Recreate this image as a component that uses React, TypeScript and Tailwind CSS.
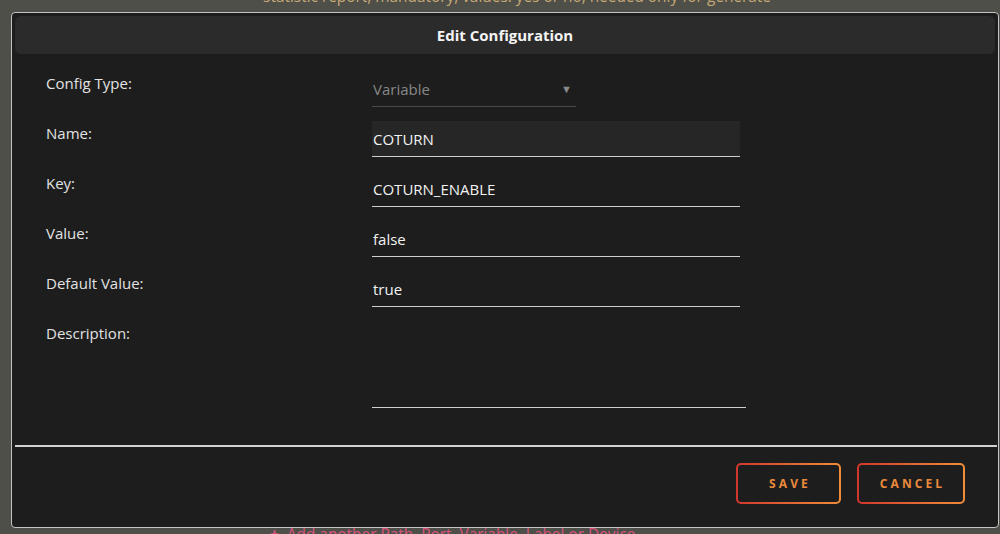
import React from "react";

const font = { fontFamily: '"Open Sans", "Noto Sans", sans-serif' };

function Label({ children }: { children: React.ReactNode }) {
  return <div className="w-[326px] shrink-0 pt-[2px] text-[15px] leading-[20px] text-[#e2e2e2]">{children}</div>;
}

function TextField({ value, filled }: { value: string; filled?: boolean }) {
  return (
    <div
      className={`w-[368px] h-[36px] flex items-center pt-[1px] pl-[1px] border-b border-[#cfcfcf] text-[15px] text-[#f2f2f2] ${
        filled ? "bg-[#262626]" : ""
      }`}
    >
      {value}
    </div>
  );
}

export default function App() {
  return (
    <div className="w-[1000px] h-[534px] overflow-hidden bg-[#4e4f48] flex flex-col" style={font}>
      <div className="h-[12px] overflow-hidden flex justify-center pl-[34px]">
        <div className="mt-[-11px] text-[15.4px] leading-[16px] text-[#c7a877] whitespace-nowrap">
          statistic report, mandatory, values: yes or no, needed only for generate
        </div>
      </div>
      <div className="ml-[11px] w-[988px] h-[516px] shrink-0 border border-[#c4c4c4] rounded-[4px] bg-[#1d1d1d] p-[3px] flex flex-col">
        <div className="h-[38px] shrink-0 rounded-[6px] bg-[#2b2b2b] flex items-center justify-center text-[15px] font-bold text-[#f4f4f4]">
          Edit Configuration
        </div>
        <div className="pl-[31px] pt-[17px] flex flex-col gap-[14px]">
          <div className="flex">
            <Label>Config Type:</Label>
            <div className="w-[204px] h-[36px] flex items-center justify-between pt-[1px] pl-[1px] pr-[4px] border-b border-[#4a4a4a] text-[15px] text-[#878787]">
              <span>Variable</span>
              <span className="text-[11px] text-[#8a8a8a]">▼</span>
            </div>
          </div>
          <div className="flex">
            <Label>Name:</Label>
            <TextField value="COTURN" filled />
          </div>
          <div className="flex">
            <Label>Key:</Label>
            <TextField value="COTURN_ENABLE" />
          </div>
          <div className="flex">
            <Label>Value:</Label>
            <TextField value="false" />
          </div>
          <div className="flex">
            <Label>Default Value:</Label>
            <TextField value="true" />
          </div>
          <div className="flex">
            <Label>Description:</Label>
            <div className="w-[374px] h-[87px] border-b border-[#cfcfcf]" />
          </div>
        </div>
        <div className="mt-[37px] mr-[-2px] h-[2px] bg-[#d2d2d2] shrink-0" />
        <div className="flex justify-end gap-[16px] pr-[30px] pt-[16px]">
          <div className="w-[105px] h-[41px] rounded-[5px] p-[2px] bg-gradient-to-r from-[#d1352d] to-[#f08c3a]">
            <div className="w-full h-full rounded-[3px] bg-[#1d1d1d] flex items-center justify-center pl-[3px] text-[12px] font-bold tracking-[0.26em] text-[#ea8a3c]">
              SAVE
            </div>
          </div>
          <div className="w-[108px] h-[41px] rounded-[5px] p-[2px] bg-gradient-to-r from-[#d1352d] to-[#f08c3a]">
            <div className="w-full h-full rounded-[3px] bg-[#1d1d1d] flex items-center justify-center pl-[3px] text-[12px] font-bold tracking-[0.26em] text-[#ea8a3c]">
              CANCEL
            </div>
          </div>
        </div>
      </div>
      <div className="h-[6px] overflow-hidden pl-[270px]">
        <div className="mt-[-1px] text-[15.4px] leading-[16px] text-[#d9527d] whitespace-nowrap">
          <span className="font-bold">+</span>&nbsp; Add another Path, Port, Variable, Label or Device
        </div>
      </div>
    </div>
  );
}
